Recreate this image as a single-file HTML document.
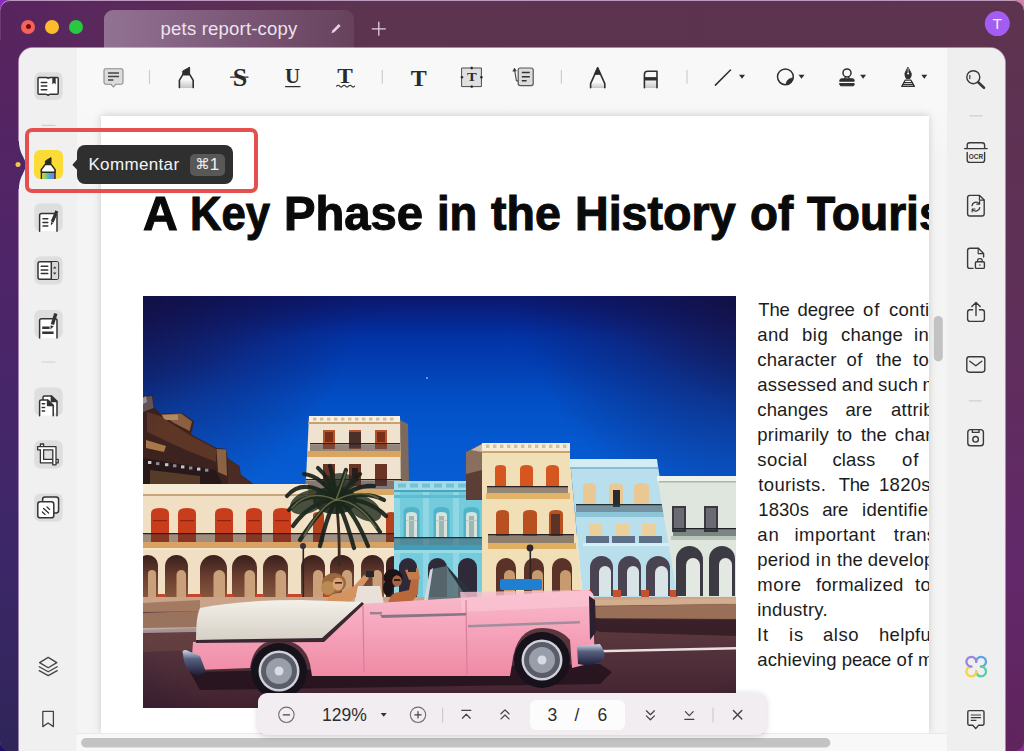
<!DOCTYPE html>
<html lang="de">
<head>
<meta charset="utf-8">
<title>pets report-copy</title>
<style>
*{box-sizing:border-box;margin:0;padding:0}
html,body{width:1024px;height:751px;overflow:hidden}
body{position:relative;font-family:"Liberation Sans",sans-serif;background:linear-gradient(to right,#8a2cc0 0,#b070b8 50%,#d97fa8 100%)}
.abs{position:absolute}
#win{position:absolute;left:0;top:0;width:1024px;height:751px;border-radius:10px;overflow:hidden;
 background:linear-gradient(to right,#57245f 0,#5a2a5b 12%,#5c344f 36%,#5d3350 100%);box-shadow:inset 0 1px 0 rgba(220,190,225,.75), inset 1px 0 0 rgba(255,255,255,.12)}
#lstrip{left:0;top:40px;width:40px;height:730px;background:linear-gradient(to bottom,#57245f 0,#4f2568 30%,#3d2769 68%,#2f2559 98%)}
#rstrip{left:990px;top:40px;width:34px;height:730px;background:linear-gradient(to bottom,#5d3350 0,#5f2f58 35%,#62286a 72%,#5f245c 98%)}
#panel{left:19px;top:48px;width:986px;height:730px;border-radius:14px 15px 0 0;background:#f8f8f8;overflow:hidden;box-shadow:0 0 0 1px rgba(255,225,248,.5)}
#lside{left:0;top:0;width:58px;height:730px;background:#f0f0f0}
#rside{left:928px;top:0;width:58px;height:730px;background:#efefef}
#docbg{left:58px;top:52px;width:870px;height:680px;background:linear-gradient(to bottom,#f8f8f8 0,#f6f6f6 40px,#f4f4f4 60px)}
#page{left:82px;top:68px;width:828px;height:617px;background:#fff;box-shadow:0 -1px 9px rgba(0,0,0,.13),0 0 5px rgba(0,0,0,.05)}
#pclip{left:0;top:0;width:828px;height:617px;overflow:hidden}
.tl{position:absolute;top:19.5px;width:14px;height:14px;border-radius:50%}
#tab{left:104px;top:10px;width:250px;height:39px;border-radius:9px 9px 0 0;background:linear-gradient(to right,rgba(255,255,255,.34),rgba(255,255,255,.22) 45%,rgba(255,255,255,.07))}
#tabtxt{left:160.6px;top:19px;font-size:18.5px;letter-spacing:.2px;color:#ede3ee;white-space:nowrap;line-height:20px}
.ibtn{position:absolute;left:15px;width:28px;height:28px;border-radius:6px;background:#e1e1e1}
svg{position:absolute;overflow:visible}
.bw{position:absolute;white-space:nowrap;font-size:18.5px;line-height:25px;color:#1c1c1c}
.ser{position:absolute;font-family:"Liberation Serif",serif;font-weight:700;color:#2a2a2a;line-height:1;white-space:nowrap;text-align:center}
.bb{position:absolute;white-space:nowrap;color:#2e2e2e;line-height:20px}
.tw{position:absolute;white-space:nowrap;font-size:49px;font-weight:700;line-height:56px;top:68.5px;color:#0a0a0a;-webkit-text-stroke:1.1px #0a0a0a;transform-origin:0 50%}
</style>
</head>
<body>
<div class="abs" style="left:0;top:731px;width:20px;height:20px;background:#1b1363"></div><div class="abs" style="left:1004px;top:731px;width:20px;height:20px;background:#8c2b93"></div>
<div id="win">
  <div id="lstrip" class="abs"></div>
  <div id="rstrip" class="abs"></div>
  <!-- title bar -->
  <div class="tl" style="left:21px;background:#f5615b"><div class="abs" style="left:4.5px;top:4.5px;width:5px;height:5px;border-radius:50%;background:#7d0a08"></div></div>
  <div class="tl" style="left:45px;background:#fdbc2e"></div>
  <div class="tl" style="left:69px;background:#28c840"></div>
  <div id="tab" class="abs"></div>
  <div id="tabtxt" class="abs">pets report-copy</div>
<!--TITLEBAR-->
  <div id="panel" class="abs">
    <div id="lside" class="abs"></div>
    <div id="docbg" class="abs"></div>
    <div id="rside" class="abs"></div>
    <div id="page" class="abs"><div id="pclip" class="abs">
<svg id="photo" style="left:42px;top:180px" width="593" height="412" viewBox="143 296 593 412" preserveAspectRatio="none">
<defs>
<linearGradient id="sky" x1="0" y1="0" x2="0" y2="1"><stop offset="0" stop-color="#08208a"/><stop offset=".14" stop-color="#032fa0"/><stop offset=".29" stop-color="#023fb3"/><stop offset=".43" stop-color="#024fc5"/><stop offset=".6" stop-color="#0558cf"/><stop offset="1" stop-color="#0a63d9"/></linearGradient>
<radialGradient id="vig" cx=".52" cy=".6" r=".8"><stop offset="0" stop-color="#0c0a3a" stop-opacity="0"/><stop offset=".7" stop-color="#0c0a3a" stop-opacity="0"/><stop offset="1" stop-color="#0c0a3a" stop-opacity=".45"/></radialGradient>
<linearGradient id="road" x1="0" y1="0" x2="0" y2="1"><stop offset="0" stop-color="#67403f"/><stop offset=".5" stop-color="#51303a"/><stop offset="1" stop-color="#40222e"/></linearGradient>
<linearGradient id="pink" x1="0" y1="0" x2="0" y2="1"><stop offset="0" stop-color="#f9bccd"/><stop offset=".5" stop-color="#f5a2ba"/><stop offset="1" stop-color="#f08aa4"/></linearGradient>
<linearGradient id="cream" x1="0" y1="0" x2="0" y2="1"><stop offset="0" stop-color="#f3f0ea"/><stop offset="1" stop-color="#d6d0c6"/></linearGradient>
<linearGradient id="chrome" x1="0" y1="0" x2="0" y2="1"><stop offset="0" stop-color="#cfd8ea"/><stop offset=".35" stop-color="#56607e"/><stop offset="1" stop-color="#1d1a34"/></linearGradient>
<linearGradient id="topd" x1="0" y1="0" x2="0" y2="1"><stop offset="0" stop-color="#0e0c44" stop-opacity=".35"/><stop offset="1" stop-color="#0e0c44" stop-opacity="0"/></linearGradient>
<linearGradient id="archg" x1="0" y1="0" x2="0" y2="1"><stop offset="0" stop-color="#3a1f1c"/><stop offset=".5" stop-color="#6b3f30"/><stop offset="1" stop-color="#8a5840"/></linearGradient>
<radialGradient id="ctr" gradientUnits="userSpaceOnUse" cx="748" cy="286" r="230"><stop offset="0" stop-color="#1d1546" stop-opacity=".9"/><stop offset=".35" stop-color="#1a1650" stop-opacity=".6"/><stop offset="1" stop-color="#14145a" stop-opacity="0"/></radialGradient>
<radialGradient id="ctl" gradientUnits="userSpaceOnUse" cx="131" cy="286" r="230"><stop offset="0" stop-color="#1d1546" stop-opacity=".9"/><stop offset=".35" stop-color="#1a1650" stop-opacity=".6"/><stop offset="1" stop-color="#14145a" stop-opacity="0"/></radialGradient>
<clipPath id="pc"><rect x="143" y="296" width="593" height="412"/></clipPath>
</defs>
<g clip-path="url(#pc)">
<rect x="143" y="296" width="593" height="240" fill="url(#sky)"/>
<rect x="506" y="296" width="230" height="230" fill="url(#ctr)"/>
<rect x="143" y="296" width="230" height="230" fill="url(#ctl)"/>
<circle cx="427" cy="378" r="1" fill="#7fb2f2"/>
<path d="M143 396L152.6 395.2L154.2 407.2L160.6 413.6L181.4 412.8L194.2 421.6L191 434.3L216.5 448L226 448.7L227.7 458.3L239.7 466.3L240.5 474.3L253.3 484L253 500L143 500Z" fill="#3d231f"/>
<path d="M143 397L152 396L153.6 408L143 412Z" fill="#6a5a58"/>
<path d="M143 398L146 396L147 402L143 404Z" fill="#a8a4a8"/>
<path d="M161 414.4L181 413.6L192 421.4L189.6 431L174 423Z" fill="#8a6040"/>
<path d="M162 415L178 414.4L178 420L164 420Z" fill="#b08a60"/>
<path d="M147 412L160 416L191 436L216 449L216 462L186 450L147 432Z" fill="#5e3626"/>
<path d="M146 440L166 446L164 452L146 448Z" fill="#a87848"/>
<path d="M216.5 449L226 449.6L227 476L218 472Z" fill="#8a6244"/>
<path d="M227.7 459L239.7 467L240.5 475L252 484L228 484Z" fill="#4a2c24"/>
<path d="M143 458L216 470L222 484L143 484Z" fill="#27181a"/>
<rect x="148" y="461" width="3.4" height="3" fill="#c9c4c6"/>
<rect x="156" y="462.1" width="3.4" height="3" fill="#8f8a90"/>
<rect x="165" y="463.2" width="3.4" height="3" fill="#c9c4c6"/>
<rect x="173" y="464.3" width="3.4" height="3" fill="#8f8a90"/>
<rect x="181" y="465.4" width="3.4" height="3" fill="#c9c4c6"/>
<rect x="189" y="466.5" width="3.4" height="3" fill="#8f8a90"/>
<rect x="197" y="467.6" width="3.4" height="3" fill="#c9c4c6"/>
<rect x="205" y="468.7" width="3.4" height="3" fill="#8f8a90"/>
<path d="M150 470L200 476L200 484L150 484Z" fill="#6b4a30" opacity=".7"/>
<path d="M400 420L408 424L409 484L400 484Z" fill="#7d6a5c"/>
<path d="M309 416L400 416L401 500L305 500Z" fill="#efe3cf"/>
<rect x="309" y="416" width="91" height="6" fill="#f7efe2"/>
<rect x="313" y="417.6" width="3.4" height="3" fill="#cdbfa8"/>
<rect x="320" y="417.6" width="3.4" height="3" fill="#cdbfa8"/>
<rect x="327" y="417.6" width="3.4" height="3" fill="#cdbfa8"/>
<rect x="334" y="417.6" width="3.4" height="3" fill="#cdbfa8"/>
<rect x="341" y="417.6" width="3.4" height="3" fill="#cdbfa8"/>
<rect x="348" y="417.6" width="3.4" height="3" fill="#cdbfa8"/>
<rect x="355" y="417.6" width="3.4" height="3" fill="#cdbfa8"/>
<rect x="362" y="417.6" width="3.4" height="3" fill="#cdbfa8"/>
<rect x="369" y="417.6" width="3.4" height="3" fill="#cdbfa8"/>
<rect x="376" y="417.6" width="3.4" height="3" fill="#cdbfa8"/>
<rect x="383" y="417.6" width="3.4" height="3" fill="#cdbfa8"/>
<rect x="390" y="417.6" width="3.4" height="3" fill="#cdbfa8"/>
<rect x="308" y="422" width="92" height="2" fill="#c9a070"/>
<rect x="323" y="430" width="12" height="19" fill="#b4532a"/>
<rect x="325" y="432" width="8" height="10" fill="#7a2e1a"/>
<rect x="349" y="430" width="12" height="19" fill="#b4532a"/>
<rect x="351" y="432" width="8" height="10" fill="#7a2e1a"/>
<rect x="375" y="430" width="12" height="19" fill="#b4532a"/>
<rect x="377" y="432" width="8" height="10" fill="#7a2e1a"/>
<rect x="349" y="432" width="12" height="16" fill="#4a3028"/>
<rect x="310" y="443" width="90" height="1.4" fill="#2a2226"/>
<rect x="310" y="445" width="90" height="6" fill="#4b3b3a" opacity=".55"/>
<rect x="307" y="451" width="94" height="6" fill="#d9a45e"/>
<rect x="323" y="464" width="12" height="22" fill="#6b3424"/>
<rect x="349" y="464" width="12" height="22" fill="#6b3424"/>
<rect x="375" y="464" width="12" height="22" fill="#6b3424"/>
<rect x="352" y="468" width="6" height="14" fill="#2a1c1c"/>
<rect x="306" y="479" width="96" height="1.4" fill="#2a2226"/>
<rect x="306" y="481" width="96" height="8" fill="#3d3134" opacity=".6"/>
<rect x="304" y="489" width="98" height="6" fill="#d8a866"/>
<rect x="143" y="484" width="165" height="118" fill="#f0dfc2"/>
<rect x="143" y="484" width="165" height="10" fill="#f5ead6"/>
<rect x="143" y="494" width="165" height="2" fill="#c9a477"/>
<rect x="304" y="495" width="98" height="107" fill="#f1e2c8"/>
<path d="M151 542V513.4Q151 508 160 508Q169 508 169 513.4V542Z" fill="#c93c1c"/>
<rect x="153" y="520" width="14" height="1.2" fill="#8e2410"/>
<path d="M178 542V513.4Q178 508 187 508Q196 508 196 513.4V542Z" fill="#c93c1c"/>
<rect x="180" y="520" width="14" height="1.2" fill="#8e2410"/>
<path d="M215 542V513.4Q215 508 224 508Q233 508 233 513.4V542Z" fill="#c93c1c"/>
<rect x="217" y="520" width="14" height="1.2" fill="#8e2410"/>
<path d="M246 542V512.8Q246 508 254 508Q262 508 262 512.8V542Z" fill="#c93c1c"/>
<rect x="248" y="520" width="12" height="1.2" fill="#8e2410"/>
<path d="M273 542V513.4Q273 508 282 508Q291 508 291 513.4V542Z" fill="#c93c1c"/>
<rect x="275" y="520" width="14" height="1.2" fill="#8e2410"/>
<path d="M313 542V515.3Q313 512 318.5 512Q324 512 324 515.3V542Z" fill="#b5421f"/>
<path d="M386 542V515Q386 512 391 512Q396 512 396 515V542Z" fill="#b5421f"/>
<rect x="143" y="533" width="259" height="1.3" fill="#2b2024"/>
<rect x="143" y="534" width="259" height="8" fill="#3c2d2e" opacity=".45"/>
<rect x="143" y="542" width="259" height="6" fill="#d9a263"/>
<rect x="143" y="548" width="259" height="2" fill="#f4e6cf"/>
<path d="M138 600V565A10 10 0 0 1 158 565V600Z" fill="url(#archg)"/>
<path d="M148 600V574A4 4 0 0 1 156 574V600Z" fill="#c9a07a"/>
<path d="M165 600V566.5A11.5 11.5 0 0 1 188 566.5V600Z" fill="url(#archg)"/>
<path d="M176.5 600V574.75A4.75 4.75 0 0 1 186 574.75V600Z" fill="#c9a07a"/>
<path d="M200 600V568.5A13.5 13.5 0 0 1 227 568.5V600Z" fill="url(#archg)"/>
<path d="M213.5 600V575.75A5.75 5.75 0 0 1 225 575.75V600Z" fill="#c9a07a"/>
<path d="M232 600V567.5A12.5 12.5 0 0 1 257 567.5V600Z" fill="url(#archg)"/>
<path d="M244.5 600V575.25A5.25 5.25 0 0 1 255 575.25V600Z" fill="#c9a07a"/>
<path d="M263 600V567.5A12.5 12.5 0 0 1 288 567.5V600Z" fill="url(#archg)"/>
<path d="M275.5 600V575.25A5.25 5.25 0 0 1 286 575.25V600Z" fill="#c9a07a"/>
<path d="M301 600V567A12 12 0 0 1 325 567V600Z" fill="url(#archg)"/>
<path d="M313 600V575A5 5 0 0 1 323 575V600Z" fill="#c9a07a"/>
<path d="M330 600V567A12 12 0 0 1 354 567V600Z" fill="url(#archg)"/>
<path d="M342 600V575A5 5 0 0 1 352 575V600Z" fill="#c9a07a"/>
<path d="M361 600V566.5A11.5 11.5 0 0 1 384 566.5V600Z" fill="url(#archg)"/>
<path d="M372.5 600V574.75A4.75 4.75 0 0 1 382 574.75V600Z" fill="#c9a07a"/>
<path d="M386 600V564A8 8 0 0 1 402 564V600Z" fill="#402020"/>
<rect x="143" y="595" width="260" height="6" fill="#c6462a" opacity=".0"/>
<rect x="158" y="594" width="8" height="7" fill="#c3482c"/>
<rect x="187" y="594" width="14" height="7" fill="#c3482c"/>
<rect x="226" y="594" width="7" height="7" fill="#c3482c"/>
<rect x="256" y="594" width="8" height="7" fill="#c3482c"/>
<rect x="287" y="594" width="15" height="7" fill="#c3482c"/>
<rect x="324" y="594" width="7" height="7" fill="#c3482c"/>
<rect x="353" y="594" width="9" height="7" fill="#c3482c"/>
<rect x="394" y="481" width="94" height="121" fill="#74cbdc"/>
<rect x="394" y="481" width="94" height="9" fill="#a3dde8"/>
<rect x="394" y="490" width="94" height="2" fill="#4aa6bf"/>
<rect x="394" y="492" width="6" height="110" fill="#8fd7e4"/>
<rect x="423" y="492" width="6" height="110" fill="#8fd7e4"/>
<rect x="453" y="492" width="6" height="110" fill="#8fd7e4"/>
<rect x="482" y="492" width="6" height="110" fill="#8fd7e4"/>
<rect x="398" y="483.5" width="8" height="4" fill="#62b7cb" opacity=".7"/>
<rect x="410" y="483.5" width="8" height="4" fill="#62b7cb" opacity=".7"/>
<rect x="422" y="483.5" width="8" height="4" fill="#62b7cb" opacity=".7"/>
<rect x="434" y="483.5" width="8" height="4" fill="#62b7cb" opacity=".7"/>
<rect x="446" y="483.5" width="8" height="4" fill="#62b7cb" opacity=".7"/>
<rect x="458" y="483.5" width="8" height="4" fill="#62b7cb" opacity=".7"/>
<rect x="470" y="483.5" width="8" height="4" fill="#62b7cb" opacity=".7"/>
<rect x="394" y="495" width="94" height="3" fill="#5bbdd1"/>
<path d="M403.5 538V511.8Q403.5 507 411.5 507Q419.5 507 419.5 511.8V538Z" fill="#4fb4ca"/>
<path d="M406 538V515.3Q406 512 411.5 512Q417 512 417 515.3V538Z" fill="#d7e3dc"/>
<rect x="409" y="516" width="5" height="21" fill="#9fb7b3"/>
<rect x="406" y="520" width="11" height="1" fill="#b9cdc6"/>
<path d="M433.5 538V511.8Q433.5 507 441.5 507Q449.5 507 449.5 511.8V538Z" fill="#4fb4ca"/>
<path d="M436 538V515.3Q436 512 441.5 512Q447 512 447 515.3V538Z" fill="#d7e3dc"/>
<rect x="439" y="516" width="5" height="21" fill="#9fb7b3"/>
<rect x="436" y="520" width="11" height="1" fill="#b9cdc6"/>
<path d="M463.5 538V511.8Q463.5 507 471.5 507Q479.5 507 479.5 511.8V538Z" fill="#4fb4ca"/>
<path d="M466 538V515.3Q466 512 471.5 512Q477 512 477 515.3V538Z" fill="#d7e3dc"/>
<rect x="469" y="516" width="5" height="21" fill="#9fb7b3"/>
<rect x="466" y="520" width="11" height="1" fill="#b9cdc6"/>
<rect x="394" y="537" width="94" height="1.3" fill="#20333d"/>
<rect x="394" y="538" width="94" height="7" fill="#2d4a58" opacity=".5"/>
<rect x="394" y="545" width="94" height="5" fill="#3f9fbb"/>
<rect x="394" y="550" width="94" height="3" fill="#9bdbe6"/>
<path d="M399 600V567A9 9 0 0 1 417 567V600Z" fill="#2f2a3a"/>
<path d="M428 600V567.5A9.5 9.5 0 0 1 447 567.5V600Z" fill="#2f2a3a"/>
<path d="M458 600V567.5A9.5 9.5 0 0 1 477 567.5V600Z" fill="#2f2a3a"/>
<path d="M466 452L482 444L482 500L466 500Z" fill="#5b3e36"/>
<path d="M466 452L482 444L482 470L466 474Z" fill="#8a6e5e"/>
<path d="M471 450L482 444L482 452Z" fill="#c9b79e"/>
<path d="M482 443L570 443L570 459L583 602L482 602Z" fill="#f1dfb8"/>
<rect x="482" y="443" width="88" height="8" fill="#f6ecd7"/>
<rect x="486" y="444.6" width="3.4" height="3.4" fill="#d2c19f"/>
<rect x="493" y="444.6" width="3.4" height="3.4" fill="#d2c19f"/>
<rect x="500" y="444.6" width="3.4" height="3.4" fill="#d2c19f"/>
<rect x="507" y="444.6" width="3.4" height="3.4" fill="#d2c19f"/>
<rect x="514" y="444.6" width="3.4" height="3.4" fill="#d2c19f"/>
<rect x="521" y="444.6" width="3.4" height="3.4" fill="#d2c19f"/>
<rect x="528" y="444.6" width="3.4" height="3.4" fill="#d2c19f"/>
<rect x="535" y="444.6" width="3.4" height="3.4" fill="#d2c19f"/>
<rect x="542" y="444.6" width="3.4" height="3.4" fill="#d2c19f"/>
<rect x="549" y="444.6" width="3.4" height="3.4" fill="#d2c19f"/>
<rect x="556" y="444.6" width="3.4" height="3.4" fill="#d2c19f"/>
<rect x="563" y="444.6" width="3.4" height="3.4" fill="#d2c19f"/>
<rect x="482" y="451" width="88" height="2" fill="#caa46c"/>
<path d="M495 487V468.3Q495 465 500.5 465Q506 465 506 468.3V487Z" fill="#d5571f"/>
<path d="M520 487V468.9Q520 465 526.5 465Q533 465 533 468.9V487Z" fill="#d5571f"/>
<path d="M546 487V468.9Q546 465 552.5 465Q559 465 559 468.9V487Z" fill="#d5571f"/>
<rect x="487" y="486" width="81" height="1.3" fill="#2a2126"/>
<rect x="487" y="487" width="81" height="6" fill="#3c2e30" opacity=".5"/>
<rect x="486" y="493" width="84" height="6" fill="#e2b468"/>
<path d="M496 536V513.9Q496 510 502.5 510Q509 510 509 513.9V536Z" fill="#b9501f"/>
<path d="M523 536V514.2Q523 510 530 510Q537 510 537 514.2V536Z" fill="#b9501f"/>
<path d="M549 536V514.2Q549 510 556 510Q563 510 563 514.2V536Z" fill="#b9501f"/>
<rect x="551" y="514" width="9" height="22" fill="#5a3428"/>
<rect x="488" y="534" width="86" height="1.3" fill="#2a2126"/>
<rect x="488" y="535" width="86" height="8" fill="#3c2e30" opacity=".55"/>
<rect x="488" y="543" width="88" height="6" fill="#e0b062"/>
<path d="M496 598V568A10 10 0 0 1 516 568V598Z" fill="#5a3228"/>
<path d="M504 598V575.5A5.5 5.5 0 0 1 515 575.5V598Z" fill="#c89a70"/>
<path d="M524 598V568A10 10 0 0 1 544 568V598Z" fill="#5a3228"/>
<path d="M532 598V575.5A5.5 5.5 0 0 1 543 575.5V598Z" fill="#c89a70"/>
<path d="M552 598V568A10 10 0 0 1 572 568V598Z" fill="#5a3228"/>
<path d="M560 598V575.5A5.5 5.5 0 0 1 571 575.5V598Z" fill="#c89a70"/>
<rect x="572" y="590" width="12" height="9" fill="#c4512c"/>
<path d="M570 459L657 459L678 600L583 600Z" fill="#b9dfec"/>
<rect x="570" y="459" width="87" height="8" fill="#d4ecf3"/>
<rect x="570" y="467" width="88" height="2" fill="#86bdd0"/>
<path d="M583 505V486.9Q583 483 589.5 483Q596 483 596 486.9V505Z" fill="#e9c894"/>
<path d="M609 505V487.2Q609 483 616 483Q623 483 623 487.2V505Z" fill="#e9c894"/>
<path d="M634 505V487.5Q634 483 641.5 483Q649 483 649 487.5V505Z" fill="#e9c894"/>
<rect x="613" y="490" width="7" height="17" fill="#2a2a30"/>
<rect x="576" y="504" width="92" height="1.3" fill="#22303a"/>
<rect x="576" y="505" width="92" height="7" fill="#2f4652" opacity=".5"/>
<rect x="575" y="512" width="94" height="5" fill="#8cc4d8"/>
<rect x="589" y="524" width="13" height="14" fill="#ecd09c"/>
<rect x="616" y="524" width="13" height="14" fill="#ecd09c"/>
<rect x="642" y="524" width="14" height="14" fill="#ecd09c"/>
<rect x="586" y="536" width="23" height="7" fill="#5d6f86"/>
<rect x="612" y="536" width="23" height="7" fill="#5d6f86"/>
<rect x="639" y="536" width="23" height="7" fill="#5d6f86"/>
<rect x="583" y="543" width="90" height="3" fill="#d5edf4"/>
<path d="M590 596V567.5A11.5 11.5 0 0 1 613 567.5V596Z" fill="#4a4452"/>
<path d="M599 596V572A6 6 0 0 1 611 572V596Z" fill="#d9e4e6"/>
<path d="M618 596V567.5A11.5 11.5 0 0 1 641 567.5V596Z" fill="#4a4452"/>
<path d="M627 596V572A6 6 0 0 1 639 572V596Z" fill="#d9e4e6"/>
<path d="M646 596V568A12 12 0 0 1 670 568V596Z" fill="#4a4452"/>
<path d="M655 596V572.5A6.5 6.5 0 0 1 668 572.5V596Z" fill="#d9e4e6"/>
<rect x="583" y="590" width="8" height="8" fill="#c4522e"/>
<rect x="613" y="590" width="8" height="8" fill="#c4522e"/>
<rect x="641" y="590" width="8" height="8" fill="#c4522e"/>
<rect x="670" y="590" width="8" height="8" fill="#c4522e"/>
<path d="M657 476L736 476L736 600L678 600Z" fill="#dfe6de"/>
<rect x="657" y="476" width="79" height="5" fill="#eef2ec"/>
<rect x="659" y="481" width="77" height="1.5" fill="#a9b8aa"/>
<rect x="672" y="506" width="14" height="26" fill="#3a3840"/>
<rect x="674" y="508" width="10" height="22" fill="#6a6a72"/>
<rect x="704" y="506" width="14" height="26" fill="#3a3840"/>
<rect x="706" y="508" width="10" height="22" fill="#6a6a72"/>
<rect x="673" y="528" width="63" height="1.3" fill="#1f2428"/>
<rect x="673" y="529" width="63" height="7" fill="#2c3438" opacity=".55"/>
<rect x="671" y="536" width="65" height="4" fill="#b9c6ba"/>
<path d="M676 596V559.5A13.5 13.5 0 0 1 703 559.5V596Z" fill="#3c3a42"/>
<path d="M686 596V565A7 7 0 0 1 700 565V596Z" fill="#e4e8e2"/>
<path d="M709 596V559A13 13 0 0 1 735 559V596Z" fill="#3c3a42"/>
<path d="M719 596V564.5A6.5 6.5 0 0 1 732 564.5V596Z" fill="#e4e8e2"/>
<path d="M336 500Q340 530 339 566" stroke="#3a2c22" stroke-width="2.8" fill="none"/>
<path d="M336 500Q304 476 287 496" stroke="#17211a" stroke-width="4.2" fill="none" stroke-linecap="round" opacity=".92"/>
<path d="M336 500Q306 490 289 510" stroke="#17211a" stroke-width="4.2" fill="none" stroke-linecap="round" opacity=".92"/>
<path d="M336 500Q312 500 293 526" stroke="#17211a" stroke-width="4.2" fill="none" stroke-linecap="round" opacity=".92"/>
<path d="M336 500Q322 506 300 540" stroke="#17211a" stroke-width="4.2" fill="none" stroke-linecap="round" opacity=".92"/>
<path d="M336 500Q322 476 304 474" stroke="#17211a" stroke-width="4.2" fill="none" stroke-linecap="round" opacity=".92"/>
<path d="M336 500Q330 478 318 468" stroke="#17211a" stroke-width="4.2" fill="none" stroke-linecap="round" opacity=".92"/>
<path d="M336 500Q334 480 330 466" stroke="#17211a" stroke-width="4.2" fill="none" stroke-linecap="round" opacity=".92"/>
<path d="M336 500Q342 482 346 470" stroke="#17211a" stroke-width="4.2" fill="none" stroke-linecap="round" opacity=".92"/>
<path d="M336 500Q350 484 360 474" stroke="#17211a" stroke-width="4.2" fill="none" stroke-linecap="round" opacity=".92"/>
<path d="M336 500Q358 484 374 486" stroke="#17211a" stroke-width="4.2" fill="none" stroke-linecap="round" opacity=".92"/>
<path d="M336 500Q366 490 384 500" stroke="#17211a" stroke-width="4.2" fill="none" stroke-linecap="round" opacity=".92"/>
<path d="M336 500Q366 496 386 516" stroke="#17211a" stroke-width="4.2" fill="none" stroke-linecap="round" opacity=".92"/>
<path d="M336 500Q360 500 380 532" stroke="#17211a" stroke-width="4.2" fill="none" stroke-linecap="round" opacity=".92"/>
<path d="M336 500Q352 506 368 546" stroke="#17211a" stroke-width="4.2" fill="none" stroke-linecap="round" opacity=".92"/>
<path d="M336 500Q344 512 354 548" stroke="#17211a" stroke-width="4.2" fill="none" stroke-linecap="round" opacity=".92"/>
<path d="M336 500Q328 512 320 546" stroke="#17211a" stroke-width="4.2" fill="none" stroke-linecap="round" opacity=".92"/>
<ellipse cx="335" cy="500" rx="22" ry="14" fill="#1a251c" opacity=".9"/>
<ellipse cx="308" cy="502" rx="19" ry="11" fill="#1e2a1e" opacity=".8" transform="rotate(-22 308 502)"/>
<ellipse cx="364" cy="508" rx="19" ry="11" fill="#1e2a1e" opacity=".8" transform="rotate(30 364 508)"/>
<ellipse cx="340" cy="482" rx="16" ry="9" fill="#1e2a1e" opacity=".75"/>
<path d="M336 500Q308 488 292 508" stroke="#6f7446" stroke-width="1.6" fill="none" stroke-linecap="round" opacity=".8"/>
<path d="M336 500Q322 504 304 536" stroke="#6f7446" stroke-width="1.6" fill="none" stroke-linecap="round" opacity=".8"/>
<path d="M336 500Q360 488 378 498" stroke="#6f7446" stroke-width="1.6" fill="none" stroke-linecap="round" opacity=".8"/>
<path d="M336 500Q358 500 376 528" stroke="#6f7446" stroke-width="1.6" fill="none" stroke-linecap="round" opacity=".8"/>
<path d="M336 500Q342 484 346 472" stroke="#6f7446" stroke-width="1.6" fill="none" stroke-linecap="round" opacity=".8"/>
<rect x="302.5" y="548" width="1.6" height="50" fill="#2a2428"/>
<circle cx="303" cy="546" r="3" fill="#3a3236"/>
<rect x="529.5" y="550" width="1.6" height="38" fill="#2a2428"/>
<circle cx="530" cy="548" r="3.4" fill="#2e282c"/>
<rect x="143" y="597" width="593" height="12" fill="#c9a488"/>
<path d="M143 603L200 600L200 612L143 616Z" fill="#a47a62"/>
<path d="M590 600L736 598L736 603L590 606Z" fill="#d2ad8e"/>
<path d="M143 612L736 604L736 708L143 708Z" fill="url(#road)"/>
<path d="M560 607L736 604L736 620L600 619Z" fill="#9a6f58"/>
<path d="M143 613L200 611L200 628L143 630Z" fill="#9a735f"/>
<path d="M560 618L736 619L736 636L600 632Z" fill="#2e1822" opacity=".75"/>
<path d="M143 628L200 627L200 632L143 633Z" fill="#d8cfd0" opacity=".6"/>
<path d="M597 650L736 647L736 649.6L597 652.6Z" fill="#e9dfe2"/>
<path d="M143 634L200 632L200 650L143 652Z" fill="#6a4644" opacity=".6"/>
<path d="M190 672L600 664L612 672L600 684L200 690Z" fill="#1d0f1a" opacity=".75"/>
<rect x="500" y="579" width="42" height="11" fill="#1f7fd2" rx="2"/>
<path d="M426 600L432 569L447 566L474 597L470 600Z" fill="#5d6f74" opacity=".85"/>
<path d="M447 566L474 597L468 599L449 571Z" fill="#26323a"/>
<path d="M430 570L433 568L428 600L424 600Z" fill="#cfd6dc"/>
<ellipse cx="334" cy="583" rx="12" ry="10" fill="#9a6a3c"/>
<ellipse cx="328" cy="588" rx="7" ry="7" fill="#b98a54"/>
<ellipse cx="338" cy="584" rx="5.4" ry="6.4" fill="#dca273"/>
<rect x="335" y="582" width="7" height="1.6" fill="#3a2a28"/>
<path d="M326 604Q328 592 340 593L354 586L364 575L369 578L358 593L348 604Z" fill="#d4935f"/>
<ellipse cx="393" cy="578" rx="9.5" ry="9" fill="#1d1317"/>
<ellipse cx="388" cy="588" rx="5" ry="8" fill="#1d1317"/>
<ellipse cx="397" cy="581" rx="4.8" ry="5.8" fill="#a8643e"/>
<rect x="394" y="579.2" width="6.4" height="1.6" fill="#1a1014"/>
<path d="M388 604Q390 592 400 592L409 590L412 574L419 575L418 594L410 604Z" fill="#b9683c"/>
<path d="M405 570L418 568L420 579L409 580Z" fill="#c47a4a"/>
<path d="M358 586L380 586L384 604L354 604Z" fill="#e9e0da"/>
<rect x="366" y="571" width="8" height="6" fill="#26262c"/>
<rect x="408" y="566" width="8" height="6" fill="#2a2a30"/>
<path d="M193 642L322 640L360 604L588 590Q594 592 594 600L594 640Q596 656 588 664L572 668L570 640Q560 628 542 628Q516 628 512 664L510 676L312 676L310 664Q304 640 279 640Q254 640 250 668L196 670Q190 668 192 656Z" fill="url(#pink)"/>
<path d="M460 592L588 590Q594 592 594 600L594 606L462 612Z" fill="#f9c3d2" opacity=".8"/>
<path d="M200 608Q240 600 300 600L362 602L322 639L196 640Q196 616 200 608Z" fill="url(#cream)"/>
<path d="M196 640L322 638L362 602L364 604L324 642L196 643Z" fill="#3a2830"/>
<path d="M363 606L364 672M466 600L467 674" stroke="#d77f99" stroke-width="1.2" fill="none"/>
<path d="M380 615L466 613L466 615.6L382 618Z" fill="#8a7482"/>
<path d="M468 625L580 621L580 623.4L468 627.6Z" fill="#a08e9a"/>
<rect x="370" y="612" width="12" height="2.4" fill="#9a8090"/>
<path d="M589 596L595 600L596 632L590 640Z" fill="#2a2030"/>
<path d="M183 654Q181 650 186 650L200 656L206 672L198 676Q184 672 183 654Z" fill="url(#chrome)"/>
<path d="M577 646L600 644Q606 652 604 660L590 666L578 664Z" fill="url(#chrome)"/>
<circle cx="279" cy="671" r="28" fill="#16111a"/>
<circle cx="279" cy="671" r="20.5" fill="#cfd2da"/>
<circle cx="279" cy="671" r="18" fill="#5a5d68"/>
<circle cx="279" cy="671" r="13" fill="#9a9eaa"/>
<circle cx="279" cy="671" r="4.5" fill="#d8dbe2"/>
<circle cx="542" cy="660" r="28" fill="#16111a"/>
<circle cx="542" cy="660" r="20.5" fill="#cfd2da"/>
<circle cx="542" cy="660" r="18" fill="#5a5d68"/>
<circle cx="542" cy="660" r="13" fill="#9a9eaa"/>
<circle cx="542" cy="660" r="4.5" fill="#d8dbe2"/>
<path d="M251 668Q254 641 279 641Q304 641 309 668L312 676L306 676Q302 646 279 646Q258 646 256 672Z" fill="#2a1420" opacity=".0"/>
<rect x="143" y="296" width="593" height="412" fill="url(#vig)"/>
<rect x="143" y="296" width="593" height="40" fill="url(#topd)"/>
</g></svg>
<span class="bw" style="left:657.3px;top:181.0px;letter-spacing:-0.15px">The</span>
<span class="bw" style="left:696.6px;top:181.0px;letter-spacing:-0.06px">degree</span>
<span class="bw" style="left:762.0px;top:181.0px;letter-spacing:0.85px">of</span>
<span class="bw" style="left:788.0px;top:181.0px;letter-spacing:0.28px">continuity</span>
<span class="bw" style="left:656.3px;top:206.0px;letter-spacing:0.35px">and</span>
<span class="bw" style="left:700.9px;top:206.0px;letter-spacing:0.55px">big</span>
<span class="bw" style="left:740.0px;top:206.0px;letter-spacing:0.20px">change</span>
<span class="bw" style="left:813.0px;top:206.0px;letter-spacing:0.28px">in</span>
<span class="bw" style="left:656.3px;top:230.9px;letter-spacing:0.25px">character</span>
<span class="bw" style="left:745.4px;top:230.9px;letter-spacing:0.60px">of</span>
<span class="bw" style="left:775.0px;top:230.9px;letter-spacing:0.00px">the</span>
<span class="bw" style="left:812.0px;top:230.9px;letter-spacing:0.28px">tourist</span>
<span class="bw" style="left:656.3px;top:255.9px;letter-spacing:0.20px">assessed</span>
<span class="bw" style="left:740.8px;top:255.9px;letter-spacing:0.35px">and</span>
<span class="bw" style="left:777.0px;top:255.9px;letter-spacing:0.33px">such</span>
<span class="bw" style="left:821.5px;top:255.9px;letter-spacing:0.28px">major</span>
<span class="bw" style="left:656.3px;top:280.9px;letter-spacing:0.12px">changes</span>
<span class="bw" style="left:744.5px;top:280.9px;letter-spacing:0.00px">are</span>
<span class="bw" style="left:790.0px;top:280.9px;letter-spacing:0.28px">attributed</span>
<span class="bw" style="left:656.3px;top:305.8px;letter-spacing:0.20px">primarily</span>
<span class="bw" style="left:736.0px;top:305.8px;letter-spacing:-0.35px">to</span>
<span class="bw" style="left:760.0px;top:305.8px;letter-spacing:0.00px">the</span>
<span class="bw" style="left:793.7px;top:305.8px;letter-spacing:0.28px">changing</span>
<span class="bw" style="left:656.3px;top:330.8px;letter-spacing:0.48px">social</span>
<span class="bw" style="left:731.5px;top:330.8px;letter-spacing:0.12px">class</span>
<span class="bw" style="left:801.0px;top:330.8px;letter-spacing:0.85px">of</span>
<span class="bw" style="left:657.3px;top:355.8px;letter-spacing:0.34px">tourists.</span>
<span class="bw" style="left:737.7px;top:355.8px;letter-spacing:-0.35px">The</span>
<span class="bw" style="left:778.0px;top:355.8px;letter-spacing:0.28px">1820s</span>
<span class="bw" style="left:657.3px;top:380.8px;letter-spacing:0.05px">1830s</span>
<span class="bw" style="left:721.3px;top:380.8px;letter-spacing:-0.35px">are</span>
<span class="bw" style="left:761.0px;top:380.8px;letter-spacing:0.28px">identified</span>
<span class="bw" style="left:656.3px;top:405.7px;letter-spacing:0.85px">an</span>
<span class="bw" style="left:693.5px;top:405.7px;letter-spacing:0.44px">important</span>
<span class="bw" style="left:792.8px;top:405.7px;letter-spacing:0.28px">transition</span>
<span class="bw" style="left:656.3px;top:430.7px;letter-spacing:0.24px">period</span>
<span class="bw" style="left:714.8px;top:430.7px;letter-spacing:0.85px">in</span>
<span class="bw" style="left:736.0px;top:430.7px;letter-spacing:0.00px">the</span>
<span class="bw" style="left:766.8px;top:430.7px;letter-spacing:0.28px">development</span>
<span class="bw" style="left:656.3px;top:455.7px;letter-spacing:0.57px">more</span>
<span class="bw" style="left:714.9px;top:455.7px;letter-spacing:0.23px">formalized</span>
<span class="bw" style="left:814.0px;top:455.7px;letter-spacing:0.28px">tourism</span>
<span class="bw" style="left:656.3px;top:480.6px;letter-spacing:0.21px">industry.</span>
<span class="bw" style="left:656.0px;top:505.6px;letter-spacing:0.85px">It</span>
<span class="bw" style="left:688.0px;top:505.6px;letter-spacing:0.85px">is</span>
<span class="bw" style="left:722.0px;top:505.6px;letter-spacing:0.53px">also</span>
<span class="bw" style="left:778.0px;top:505.6px;letter-spacing:0.28px">helpful</span>
<span class="bw" style="left:656.3px;top:530.6px;letter-spacing:0.14px">achieving</span>
<span class="bw" style="left:740.8px;top:530.6px;letter-spacing:-0.20px">peace</span>
<span class="bw" style="left:795.5px;top:530.6px;letter-spacing:0.80px">of</span>
<span class="bw" style="left:816.9px;top:530.6px;letter-spacing:0.28px">mind</span>
<span class="tw" style="left:42.0px;transform:scaleX(0.982)">A</span>
<span class="tw" style="left:88.8px;transform:scaleX(0.891)">Key</span>
<span class="tw" style="left:183.4px;transform:scaleX(0.963)">Phase</span>
<span class="tw" style="left:335.7px;transform:scaleX(0.926)">in</span>
<span class="tw" style="left:390.3px;transform:scaleX(0.949)">the</span>
<span class="tw" style="left:474.1px;transform:scaleX(0.951)">History</span>
<span class="tw" style="left:648.8px;transform:scaleX(0.935)">of</span>
<span class="tw" style="left:706.4px;transform:scaleX(0.942)">Tourism</span>
    </div></div>
<!--TOOLBAR-->
<!--LSIDE-->
<!--RSIDE-->
<!--BOTTOM-->
  </div>
<svg id="ov" style="left:0;top:0" width="1024" height="751" viewBox="0 0 1024 751">
<defs>
<linearGradient id="rb" x1="0" y1="0" x2="1" y2="0"><stop offset="0" stop-color="#f4d23a"/><stop offset=".3" stop-color="#7ed06a"/><stop offset=".6" stop-color="#46a8e6"/><stop offset="1" stop-color="#8f6fe0"/></linearGradient>
<linearGradient id="gfade" x1="0" y1="0" x2="0" y2="1"><stop offset="0" stop-color="#cfcfcf" stop-opacity=".2"/><stop offset="1" stop-color="#c4c4c4"/></linearGradient>
</defs>
<!-- ===== title bar bits ===== -->
<path d="M331.4 33.2L332.3 30.4L338.7 24L340.6 25.9L334.2 32.3Z" fill="#e6d2e8"/>
<path d="M371.8 28.8H385.8M378.8 21.8V35.8" stroke="#dfcfe0" stroke-width="1.3" fill="none"/>
<circle cx="997.3" cy="23.6" r="12.5" fill="#a45df2"/>
<!-- ===== left sidebar ===== -->
<g fill="none" stroke="#333" stroke-width="1.5" stroke-linejoin="round" stroke-linecap="round">
<rect x="34.3" y="72.2" width="28.4" height="27.8" rx="6" fill="#dedede" stroke="none"/>
<path d="M38 78.6Q38 77.6 39 77.6H46.2Q47.6 77.6 48.1 78.4Q48.6 77.6 50 77.6H57.2Q58.2 77.6 58.2 78.6V93.2Q58.2 94.2 57.2 94.2H50.4Q49 94.2 48.1 95.4Q47.2 94.2 45.8 94.2H39Q38 94.2 38 93.2Z" fill="#fff"/>
<path d="M41.3 82.5H46.8M41.3 86.1H46.8M41.3 89.7H46.8"/>
<path d="M52.3 77.6H55.7V84.4L54 82.8L52.3 84.4Z" fill="#333" stroke="none"/>
<path d="M42 125.3H55" stroke="#cfcfcf" stroke-width="1.2"/>
<rect x="34.3" y="203.2" width="28.4" height="28" rx="6" fill="#dedede" stroke="none"/>
<path d="M39.6 231.2V215.6Q39.6 213.6 41.6 213.6H55Q57 213.6 57 215.6V231.2" fill="#fff"/>
<path d="M43 218.7H47.8M43 222.4H47.8M43 225.9H47.8"/>
<path d="M56.9 211L52.2 221.8" stroke-width="3.2" stroke-linecap="butt"/>
<path d="M51 222L53.4 223L50.9 225.4Z" fill="#333" stroke="none"/>
<rect x="34.3" y="256.2" width="28.4" height="28.2" rx="6" fill="#dedede" stroke="none"/>
<rect x="38" y="261.8" width="20.4" height="17.4" rx="2" fill="#fff"/>
<path d="M51.4 262H57.4Q58.2 262 58.2 263V278Q58.2 279 57.4 279H51.4Z" fill="#d8d8d8" stroke="none"/>
<path d="M51.3 262V279M41.2 266.2H47.8M41.2 270H47.8M41.2 273.5H47.8"/>
<path d="M53 268.4L54.7 266.2L56.4 268.4ZM53 272.6L54.7 274.8L56.4 272.6Z" fill="#333" stroke="none"/>
<rect x="34.3" y="310" width="28.4" height="28" rx="6" fill="#dedede" stroke="none"/>
<path d="M39.6 338V320.8Q39.6 318.8 41.6 318.8H55Q57 318.8 57 320.8V338" fill="#fff"/>
<path d="M42.2 327.8H49.6M42.2 332.8H53.6" stroke-width="2.6" stroke-linecap="butt"/>
<path d="M55.8 313.4L52.4 324.4" stroke-width="3.4" stroke-linecap="butt"/>
<path d="M50.6 325.2L53.8 326.2L50.4 329.4Z" fill="#333" stroke="none"/>
<path d="M42 362H55" stroke="#cfcfcf" stroke-width="1.2"/>
<rect x="34.3" y="387.6" width="28.4" height="28.2" rx="6" fill="#dedede" stroke="none"/>
<path d="M43 399.6V397.6Q43 396 44.6 396H51.6L57 401.4V415.8" fill="#fff"/>
<path d="M51.4 396.2V401.6H56.8Z" fill="#333"/>
<path d="M39.6 415.8V401.6Q39.6 400 41.2 400H47.8L53.2 405.4V415.8" fill="#fff"/>
<path d="M47.6 400.2V405.6H53Z" fill="#333"/>
<path d="M42.2 403.8H44.6M42.2 407.4H44.6M42.2 411H44.6"/>
<rect x="34.3" y="440.2" width="28.4" height="28.2" rx="6" fill="#dedede" stroke="none"/>
<path d="M40.4 444V462.8H58.2V459.4H43.6V444Z" fill="#fff" stroke-width="1.3"/><path d="M37.6 446.6V449.8H52.8V464.8H56V446.6Z" fill="#fff" stroke-width="1.3"/><path d="M41 450H43" stroke="#fff" stroke-width="2.4" stroke-linecap="butt"/>
<rect x="34.3" y="493.6" width="28.4" height="28.2" rx="6" fill="#dedede" stroke="none"/>
<rect x="42.6" y="497" width="16" height="16" rx="2.4" fill="#f4f4f4"/>
<rect x="37.8" y="501.8" width="16" height="16" rx="2.4" fill="#fff"/>
<path d="M42.4 512L45 514.4M43.6 508.4L48.6 513M47 507L49.6 509.4" stroke-width="1.3"/>
<path d="M48.2 657.4L56.8 662.6L48.2 667.8L39.6 662.6Z" stroke-width="1.3" stroke="#444"/>
<path d="M39.2 666.8L48.2 671.8L57.2 666.8M39.2 670.6L48.2 675.6L57.2 670.6" stroke-width="1.3" stroke="#444"/>
<path d="M42.8 711.4H53.4V726.6L48.1 723L42.8 726.6Z" stroke-width="1.3" stroke="#444"/>
</g>
<!-- ===== toolbar ===== -->
<g fill="none" stroke="#2f2f2f" stroke-width="1.6" stroke-linejoin="round" stroke-linecap="round">
<path d="M104 70.4Q104 68.8 105.6 68.8H121.4Q123 68.8 123 70.4V82.6Q123 84.2 121.4 84.2H116L113.4 87L110.8 84.2H105.6Q104 84.2 104 82.6Z" fill="#dcdcdc" stroke="#8a8a8a" stroke-width="1.1"/>
<path d="M108 73H119M108 76.5H119M108 80H113.4" stroke="#444" stroke-width="1.3" stroke-linecap="butt"/>
<path d="M149.5 70.4V83.2M382.3 70.4V83.2M561.4 70.4V83.2M687 70.4V83.2" stroke="#cdcdcd" stroke-width="1.2"/>
<path d="M179.6 80.6H193.2V88H179.6Z" fill="url(#gfade)" stroke="none"/>
<path d="M179.4 87.6V80.4L182.8 74.6H189.8L193.2 80.4V87.6" />
<path d="M182.8 74V71L189.6 67.2V74Z" fill="#2f2f2f" stroke-width="1"/>
<path d="M230.6 77.2H248" stroke-width="1.3"/>
<path d="M285.6 86.6H300" stroke-width="1.4"/>
<path d="M336.6 86.2q1.5 -1.8 3 0t3 0t3 0t3 0t3 0t3 0" stroke-width="1.1"/>
<rect x="462" y="68" width="19.4" height="18.6" fill="#e0e0e0" stroke="#4a4a4a" stroke-width="1"/>
<path d="M471.7 66.8V69.2M471.7 85.4V87.8M460.8 77.3H463.2M480.2 77.3H482.6" stroke-width="2" stroke="#222" stroke-linecap="butt"/>
<rect x="518.2" y="68" width="15" height="17.6" rx="2" fill="#dcdcdc" stroke="#555" stroke-width="1.2"/>
<path d="M521.8 72.6H529.8M521.8 76.7H529.8M521.8 80.8H526.6" stroke="#333" stroke-width="1.5" stroke-linecap="butt"/>
<path d="M518 81L516.4 80.6L514.5 69.4" stroke="#444" stroke-width="1.1"/>
<path d="M513 71L514.4 68.2L516.2 70.6Z" fill="#333" stroke="#333" stroke-width=".6"/>
<path d="M591 83H604.4V88H591Z" fill="url(#gfade)" stroke="none"/>
<path d="M590.6 87.8V83.6L597.7 67.8L604.8 83.6V87.8"/>
<path d="M597.7 67.6L600.6 74.4H594.8Z" fill="#2f2f2f" stroke-width=".8"/>
<path d="M644.6 81H657V88H644.6Z" fill="url(#gfade)" stroke="none"/>
<path d="M644.4 87.8V74.4Q644.4 71.2 647.6 71.2H657V87.8"/>
<path d="M644.4 78.8H657" stroke-width="3.4" stroke-linecap="butt"/>
<path d="M715.4 85.1L730.5 70" stroke-width="1.5"/>
<path d="M739 74.8H745L742 78.8ZM798.5 74.8H804.5L801.5 78.8ZM860.1 74.8H866.1L863.1 78.8ZM921.3 74.8H927.3L924.3 78.8Z" fill="#2f2f2f" stroke="none"/>
<circle cx="785.4" cy="76.8" r="7.9" stroke-width="1.5"/>
<path d="M793.2 78Q787 77.6 785.8 84.6Q791.6 84 793.2 78Z" fill="#2f2f2f" stroke-width=".6"/>
<circle cx="847" cy="72.9" r="4" stroke-width="1.5"/>
<path d="M845.6 76.6L844.8 78.6M848.4 76.6L849.2 78.6" stroke-width="1.3"/><path d="M839.8 80.4Q839.8 78.8 841.4 78.8H852.6Q854.2 78.8 854.2 80.4V81.2H839.8ZM839.8 83.6H854.2V84.6Q854.2 85.8 853 85.8H841Q839.8 85.8 839.8 84.6Z" fill="#2f2f2f" stroke-width="1"/>
<path d="M908.1 67.4L911.2 73.4Q911.6 76 909.8 78.6H906.4Q904.6 76 905 73.4Z" fill="#2f2f2f" stroke-width="1"/>
<circle cx="908.1" cy="73.4" r="1" fill="#fff" stroke="none"/>
<path d="M908.1 68V72.2" stroke="#fff" stroke-width=".6"/>
<path d="M905.2 80.2H911L914.4 86.4H901.8Z" fill="#fff" stroke-width="1.3"/>
<path d="M903.8 82.6H912.4M902.8 84.6H913.4" stroke-width="1.2" stroke-linecap="butt"/>
</g>
<!-- ===== right sidebar ===== -->
<g fill="none" stroke="#3a3a3a" stroke-width="1.4" stroke-linejoin="round" stroke-linecap="round">
<circle cx="973.3" cy="77.2" r="6.5"/>
<path d="M978.2 82.2L984 87.8" stroke-width="2.6"/>
<path d="M969.8 75.4V78.6" stroke-width="1.2"/>
<path d="M969.8 115.8H982M969.4 400.8H981.4" stroke="#cfcfcf" stroke-width="1.2"/>
<path d="M964.6 148.6H987.2M967.2 148.4V145.2Q967.2 142.8 969.6 142.8H982.2Q984.6 142.8 984.6 145.2V148.4M967.2 152.4V160Q967.2 162.4 969.6 162.4H982.2Q984.6 162.4 984.6 160V152.4"/>
<path d="M967.6 197.6Q967.6 195.4 969.8 195.4H979.6L984.2 200V213.8Q984.2 216 982 216H969.8Q967.6 216 967.6 213.8Z"/>
<path d="M979.4 195.6V200.2H984" stroke-width="1.2"/>
<path d="M972 205.6A4.1 4.1 0 0 1 979.2 203.6M979.8 207.6A4.1 4.1 0 0 1 972.6 209.6" stroke-width="1.3"/><path d="M979.6 201.4V204.2H976.8M972.2 211.8V209H975" stroke-width="1.2"/>
<path d="M973 268.4H969.8Q967.6 268.4 967.6 266.2V250.4Q967.6 248.2 969.8 248.2H978.4L983.6 253.4V257"/>
<path d="M978.2 248.4V253.6H983.4" stroke-width="1.2"/>
<rect x="975.4" y="261.8" width="9" height="6.6" rx="1.2"/>
<path d="M977.6 261.6V260.4Q977.6 258.6 979.9 258.6Q982.2 258.6 982.2 260.4V261.6" stroke-width="1.2"/>
<circle cx="979.9" cy="265" r=".8" fill="#3a3a3a" stroke="none"/>
<path d="M972.6 309.8H970Q967.6 309.8 967.6 312.2V319Q967.6 321.4 970 321.4H982Q984.4 321.4 984.4 319V312.2Q984.4 309.8 982 309.8H979.4M976 315.6V302.6M971.8 306.4L976 302.4L980.2 306.4"/>
<rect x="966.8" y="356.8" width="18" height="15.4" rx="2.6"/>
<path d="M969.8 361.2L975.8 365.8L981.8 361.2"/>
<rect x="967.8" y="429.6" width="15.6" height="16.2" rx="2.8"/>
<path d="M972.4 429.8V432.4H979V429.8"/>
<circle cx="975.6" cy="439.3" r="2.8"/>
<path d="M967.8 712Q967.8 710.6 969.2 710.6H982.6Q984 710.6 984 712V723.8Q984 725.2 982.6 725.2H978.6L975.7 728.6L972.8 725.2H969.2Q967.8 725.2 967.8 723.8Z"/>
<path d="M970.8 715H981M970.8 717.7H981M970.8 720.3H976.4" stroke-width="1.2" stroke-linecap="butt"/>
</g>
<!-- AI clover -->
<g fill="none" stroke-width="2.3" stroke-linecap="round">
<path d="M976.20 661.90A4.9 4.9 0 1 1 980.90 666.60" stroke="#5aa5e8"/>
<path d="M980.90 666.60A4.9 4.9 0 1 1 976.20 671.30" stroke="#58cfa8"/>
<path d="M976.20 671.30A4.9 4.9 0 1 1 971.50 666.60" stroke="#f1d843"/>
<path d="M971.50 666.60A4.9 4.9 0 1 1 976.20 661.90" stroke="#9a83e2"/>
</g>
<!-- scrollbars -->
<rect x="76.5" y="733.5" width="870" height="18" fill="#f8f8f8"/><path d="M76.5 733.5H946.5" stroke="#e9e9e9" stroke-width="1"/>
<rect x="933.8" y="316" width="9" height="45.4" rx="4.5" fill="#c2c2c2"/>
<rect x="81" y="738" width="749.4" height="9.4" rx="4.7" fill="#c3c3c3"/>
</svg>

<!-- avatar letter -->
<div class="abs" style="left:984.8px;top:11.4px;width:25px;height:25px;line-height:25px;text-align:center;color:#f7e9fd;font-size:15.5px">T</div>
<!-- toolbar serif letters -->
<div class="ser" style="left:229px;top:64.5px;width:22px;font-size:26px">S</div>
<div class="ser" style="left:281.6px;top:64.1px;width:22px;font-size:20.8px;line-height:24px">U</div>
<div class="ser" style="left:334px;top:64.1px;width:22px;font-size:20.8px;line-height:24px;transform:scaleX(1.12)">T</div>
<div class="ser" style="left:407.7px;top:64.4px;width:22px;font-size:24px;line-height:28px;transform:scaleX(1.0)">T</div>
<div class="ser" style="left:460.6px;top:69.4px;width:22px;font-size:13.5px;line-height:16px;transform:scaleX(1.08)">T</div>
<div class="abs" style="left:967.4px;top:152.2px;width:17px;height:10px;line-height:10px;font-size:8px;font-weight:700;text-align:center;color:#333;letter-spacing:.2px;transform:scaleX(.8)">OCR</div>
<!-- bottom bar -->
<div class="abs" style="left:258px;top:693px;width:508px;height:42px;border-radius:9px;background:#f1edf1;box-shadow:0 1px 6px rgba(60,30,60,.22)"></div>
<div class="abs" style="left:530px;top:700px;width:95px;height:30px;border-radius:6px;background:#fdfcfd"></div>
<div class="bb" style="left:322px;top:705px;font-size:17.5px">129%</div>
<div class="bb" style="left:547.6px;top:705px;font-size:17.5px">3</div>
<div class="bb" style="left:574.4px;top:705px;font-size:17.5px">/</div>
<div class="bb" style="left:597.6px;top:705px;font-size:17.5px">6</div>
<svg style="left:0;top:0" width="1024" height="751" viewBox="0 0 1024 751">
<g fill="none" stroke="#444" stroke-width="1.2" stroke-linecap="round" stroke-linejoin="round">
<circle cx="286.4" cy="714.8" r="7.7" stroke="#707070" stroke-width="1.1"/><path d="M283.2 714.8H289.6" stroke-width="1.2"/>
<circle cx="418" cy="714.8" r="7.7" stroke="#707070" stroke-width="1.1"/><path d="M414.8 714.8H421.2M418 711.6V718" stroke-width="1.2"/>
<path d="M380.7 713H386.7L383.7 716.8Z" fill="#333" stroke="none"/>
<path d="M442.6 708V722M713 708V722" stroke="#cfcacf" stroke-width="1.2"/>
<path d="M461.8 710.4H470.8M462.4 718.2L466.3 714.2L470.2 718.2" stroke-width="1.25"/>
<path d="M501 713.8L505 709.9L509 713.8M501 718.9L505 715L509 718.9" stroke-width="1.25"/>
<path d="M646.4 710.8L650.4 714.7L654.4 710.8M646.4 715.9L650.4 719.8L654.4 715.9" stroke-width="1.25"/>
<path d="M684.8 719.4H693.8M685.4 711.6L689.3 715.6L693.2 711.6" stroke-width="1.25"/>
<path d="M733.4 710.6L741.8 719M741.8 710.6L733.4 719" stroke-width="1.4"/>
</g>
</svg>
<!-- notch + dot on the panel edge -->
<svg style="left:0;top:0" width="1024" height="751" viewBox="0 0 1024 751">
<path d="M17 140V141H18.8Q19.2 150 22.8 156Q25.6 160.6 25.6 165Q25.6 169.4 22.8 174Q19.2 180 18.8 189H17V190Z" fill="#4e2668"/>
<circle cx="18" cy="164.6" r="2.5" fill="#f5c451"/>
</svg>
<!-- yellow active button -->
<div class="abs" style="left:34.3px;top:150px;width:28.4px;height:28.6px;border-radius:6px;background:#fbdb35;overflow:hidden">
<svg style="left:-34.3px;top:-150px" width="1024" height="751" viewBox="0 0 1024 751">
<path d="M41.6 172.2H55V180H41.6Z" fill="url(#rb)"/>
<path d="M41.4 180V169.6L45.2 164.6H51.2L55 169.6V180Z" fill="none" stroke="#2b2b1e" stroke-width="1.4" stroke-linejoin="round"/>
<path d="M41.4 172.2V169.6L45.2 164.6H51.2L55 169.6V172.2Z" fill="#fff" stroke="#2b2b1e" stroke-width="1.4" stroke-linejoin="round"/>
<path d="M45.4 164.2V161L51 157.6V164.2Z" fill="#2b2b1e" stroke="#2b2b1e" stroke-width="1" stroke-linejoin="round"/>
</svg>
</div>
<!-- tooltip -->
<div class="abs" style="left:77px;top:144.6px;width:156px;height:39.4px;border-radius:8px;background:#2f2f2f"></div>
<svg style="left:0;top:0" width="1024" height="751" viewBox="0 0 1024 751"><path d="M78 158.6L72.8 164.2Q72.4 164.7 72.8 165.2L78 170.8Z" fill="#2f2f2f"/></svg>
<div class="abs" style="left:88.4px;top:154.8px;font-size:17px;line-height:20px;color:#f4f4f4;white-space:nowrap;letter-spacing:.35px">Kommentar</div>
<div class="abs" style="left:190px;top:154px;width:34.6px;height:21.6px;border-radius:5px;background:#585858;color:#f0f0f0;font-size:17px;line-height:22.4px;text-align:center;white-space:nowrap;font-family:'Liberation Sans','DejaVu Sans',sans-serif"><span style="font-family:'DejaVu Sans',sans-serif;font-size:14.5px;position:relative;top:-.6px">⌘</span>1</div>
<!-- red highlight rectangle -->
<div class="abs" style="left:25px;top:127.5px;width:233px;height:65px;border:4.6px solid #e5504f;border-radius:7px"></div>

</div>
</body>
</html>
